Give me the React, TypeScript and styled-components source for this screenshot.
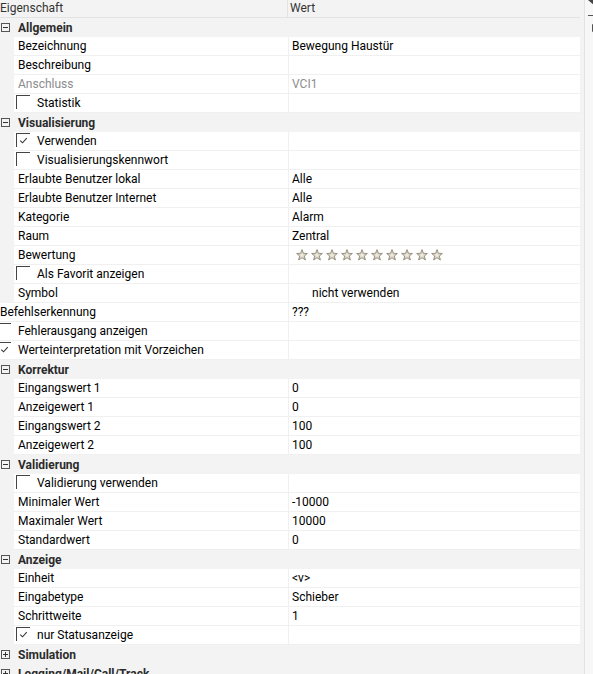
import React from 'react';
import styled, {createGlobalStyle} from 'styled-components';

type GroupItem = {kind: 'group'; label: string; open: boolean};
type PropItem = {
    kind: 'prop';
    label: string;
    value?: string;
    check?: boolean;
    disabled?: boolean;
    flat?: boolean;
    stars?: number;
    valueIndent?: number;
};
type Item = GroupItem | PropItem;

const ITEMS: Item[] = [
    {kind: 'group', label: 'Allgemein', open: true},
    {kind: 'prop', label: 'Bezeichnung', value: 'Bewegung Haustür'},
    {kind: 'prop', label: 'Beschreibung'},
    {kind: 'prop', label: 'Anschluss', value: 'VCI1', disabled: true},
    {kind: 'prop', label: 'Statistik', check: false},
    {kind: 'group', label: 'Visualisierung', open: true},
    {kind: 'prop', label: 'Verwenden', check: true},
    {kind: 'prop', label: 'Visualisierungskennwort', check: false},
    {kind: 'prop', label: 'Erlaubte Benutzer lokal', value: 'Alle'},
    {kind: 'prop', label: 'Erlaubte Benutzer Internet', value: 'Alle'},
    {kind: 'prop', label: 'Kategorie', value: 'Alarm'},
    {kind: 'prop', label: 'Raum', value: 'Zentral'},
    {kind: 'prop', label: 'Bewertung', stars: 10},
    {kind: 'prop', label: 'Als Favorit anzeigen', check: false},
    {kind: 'prop', label: 'Symbol', value: 'nicht verwenden', valueIndent: 20},
    {kind: 'prop', label: 'Befehlserkennung', value: '???', flat: true},
    {kind: 'prop', label: 'Fehlerausgang anzeigen', check: false, flat: true},
    {kind: 'prop', label: 'Werteinterpretation mit Vorzeichen', check: true, flat: true},
    {kind: 'group', label: 'Korrektur', open: true},
    {kind: 'prop', label: 'Eingangswert 1', value: '0'},
    {kind: 'prop', label: 'Anzeigewert 1', value: '0'},
    {kind: 'prop', label: 'Eingangswert 2', value: '100'},
    {kind: 'prop', label: 'Anzeigewert 2', value: '100'},
    {kind: 'group', label: 'Validierung', open: true},
    {kind: 'prop', label: 'Validierung verwenden', check: false},
    {kind: 'prop', label: 'Minimaler Wert', value: '-10000'},
    {kind: 'prop', label: 'Maximaler Wert', value: '10000'},
    {kind: 'prop', label: 'Standardwert', value: '0'},
    {kind: 'group', label: 'Anzeige', open: true},
    {kind: 'prop', label: 'Einheit', value: '<v>'},
    {kind: 'prop', label: 'Eingabetype', value: 'Schieber'},
    {kind: 'prop', label: 'Schrittweite', value: '1'},
    {kind: 'prop', label: 'nur Statusanzeige', check: true},
    {kind: 'group', label: 'Simulation', open: false},
    {kind: 'group', label: 'Logging/Mail/Call/Track', open: false},
];

const Expander = ({open}: {open: boolean}) => (
    <ExpanderIcon width='9' height='9' viewBox='0 0 9 9'>
        <rect x='0.5' y='0.5' width='8' height='8' fill='none' stroke='#555' />
        <line x1='2' y1='4.5' x2='7' y2='4.5' stroke='#333' />
        {!open && <line x1='4.5' y1='2' x2='4.5' y2='7' stroke='#333' />}
    </ExpanderIcon>
);

const Star = () => (
    <svg width='12' height='12' viewBox='0 0 12 12'>
        <defs>
            <radialGradient id='starFill' cx='50%' cy='55%' r='55%'>
                <stop offset='0%' stopColor='#f4f2ec' />
                <stop offset='60%' stopColor='#c9c3b1' />
                <stop offset='100%' stopColor='#9c9682' />
            </radialGradient>
        </defs>
        <polygon
            points='6,0.6 7.5,4.3 11.4,4.5 8.4,7 9.4,11 6,8.8 2.6,11 3.6,7 0.6,4.5 4.5,4.3'
            fill='url(#starFill)'
            stroke='#8d8774'
            strokeWidth='0.8'
            strokeLinejoin='round'
        />
    </svg>
);

const CheckBox = ({checked, flat}: {checked: boolean; flat?: boolean}) => (
    <Box $flat={flat}>
        {checked && (
            <svg width='14' height='14' viewBox='0 0 14 14'>
                <polyline points='3.5,6.5 6,9 10.5,4' fill='none' stroke='#333' strokeWidth='1.1' />
            </svg>
        )}
    </Box>
);

const PropRow = ({item}: {item: PropItem}) => (
    <Row>
        {!item.flat && <Gutter />}
        <NameCell $flat={item.flat} $disabled={item.disabled}>
            {item.check !== undefined && <CheckBox checked={item.check} flat={item.flat} />}
            <Label $withBox={item.check !== undefined}>{item.label}</Label>
        </NameCell>
        <ValueCell $disabled={item.disabled} $indent={item.valueIndent ?? 0}>
            {item.stars ? (
                <Stars>
                    {Array.from({length: item.stars}, (_, i) => (
                        <Star key={i} />
                    ))}
                </Stars>
            ) : (
                item.value
            )}
        </ValueCell>
    </Row>
);

const App = () => {
    return (
        <>
            <GlobalStyle />
            <Window>
                <Grid>
                    <Header>
                        <HeaderCell>Eigenschaft</HeaderCell>
                        <HeaderCell $value>Wert</HeaderCell>
                    </Header>
                    {ITEMS.map((item, index) =>
                        item.kind === 'group' ? (
                            <GroupRow key={index}>
                                <Expander open={item.open} />
                                <GroupLabel>{item.label}</GroupLabel>
                            </GroupRow>
                        ) : (
                            <PropRow key={index} item={item} />
                        ),
                    )}
                </Grid>
                <SidePanel>
                    <svg width='8' height='32' viewBox='0 0 8 32'>
                        <polygon points='2,0 8,0 8,5' fill='#444' />
                        <line x1='2' y1='15.5' x2='8' y2='15.5' stroke='#555' />
                        <polyline points='8,24.5 6.5,24.5 6.5,31.5 8,31.5' fill='none' stroke='#555' />
                    </svg>
                </SidePanel>
            </Window>
        </>
    );
};

export default App;

const GlobalStyle = createGlobalStyle`
    body {
        margin: 0;
        background: #f3f3f3;
        font-family: Roboto, "Noto Sans", sans-serif;
        font-size: 12px;
        color: #000;
        overflow: hidden;
    }
`;

const Window = styled.div`
    display: flex;
    width: 593px;
    height: 674px;
    overflow: hidden;
`;

const Grid = styled.div`
    width: 584px;
    flex: none;
    display: flex;
    flex-direction: column;
    border-right: 1px solid #e2e2e2;
`;

const Header = styled.div`
    display: flex;
    height: 18px;
    flex: none;
    box-sizing: border-box;
    border-bottom: 1px solid #e3e3e3;
    margin-right: 4px;
`;

const HeaderCell = styled.div<{$value?: boolean}>`
    width: ${p => (p.$value ? '291px' : '288px')};
    line-height: 17px;
    padding-left: ${p => (p.$value ? '2px' : '0')};
    border-left: ${p => (p.$value ? '1px solid #e3e3e3' : 'none')};
    color: #333;
    white-space: nowrap;
`;

const GroupRow = styled.div`
    display: flex;
    align-items: center;
    height: 19px;
    flex: none;
`;

const ExpanderIcon = styled.svg`
    flex: none;
    margin-left: 1px;
`;

const GroupLabel = styled.span`
    margin-left: 8px;
    font-weight: 700;
    color: #2b2b2b;
    white-space: nowrap;
`;

const Row = styled.div`
    display: flex;
    height: 19px;
    flex: none;
`;

const Gutter = styled.div`
    width: 14px;
    flex: none;
`;

const NameCell = styled.div<{$flat?: boolean; $disabled?: boolean}>`
    width: ${p => (p.$flat ? '288px' : '274px')};
    box-sizing: border-box;
    display: flex;
    align-items: center;
    padding-left: ${p => (p.$flat ? '0' : '4px')};
    background: #ffffff;
    border-bottom: 1px solid #f0f0f0;
    color: ${p => (p.$disabled ? '#8c8c8c' : '#000')};
    white-space: nowrap;
    overflow: hidden;
`;

const Box = styled.span<{$flat?: boolean}>`
    width: 14px;
    height: 14px;
    flex: none;
    box-sizing: border-box;
    margin-left: ${p => (p.$flat ? '-3px' : '-2px')};
    margin-bottom: 2px;
    border-top: 1px solid #444;
    border-left: 1px solid #444;
    display: flex;
`;

const Label = styled.span<{$withBox?: boolean}>`
    margin-left: ${p => (p.$withBox ? '7px' : '0')};
    line-height: 18px;
`;

const ValueCell = styled.div<{$disabled?: boolean; $indent: number}>`
    width: 292px;
    box-sizing: border-box;
    display: flex;
    align-items: center;
    padding-left: ${p => 3 + p.$indent}px;
    background: #ffffff;
    border-left: 1px solid #f0f0f0;
    border-bottom: 1px solid #f0f0f0;
    color: ${p => (p.$disabled ? '#8c8c8c' : '#000')};
    white-space: nowrap;
`;

const Stars = styled.div`
    display: flex;
    gap: 3px;
    margin-left: 4px;
`;

const SidePanel = styled.div`
    flex: 1;
    background: #f7f7f7;
    padding-left: 1px;
`;
